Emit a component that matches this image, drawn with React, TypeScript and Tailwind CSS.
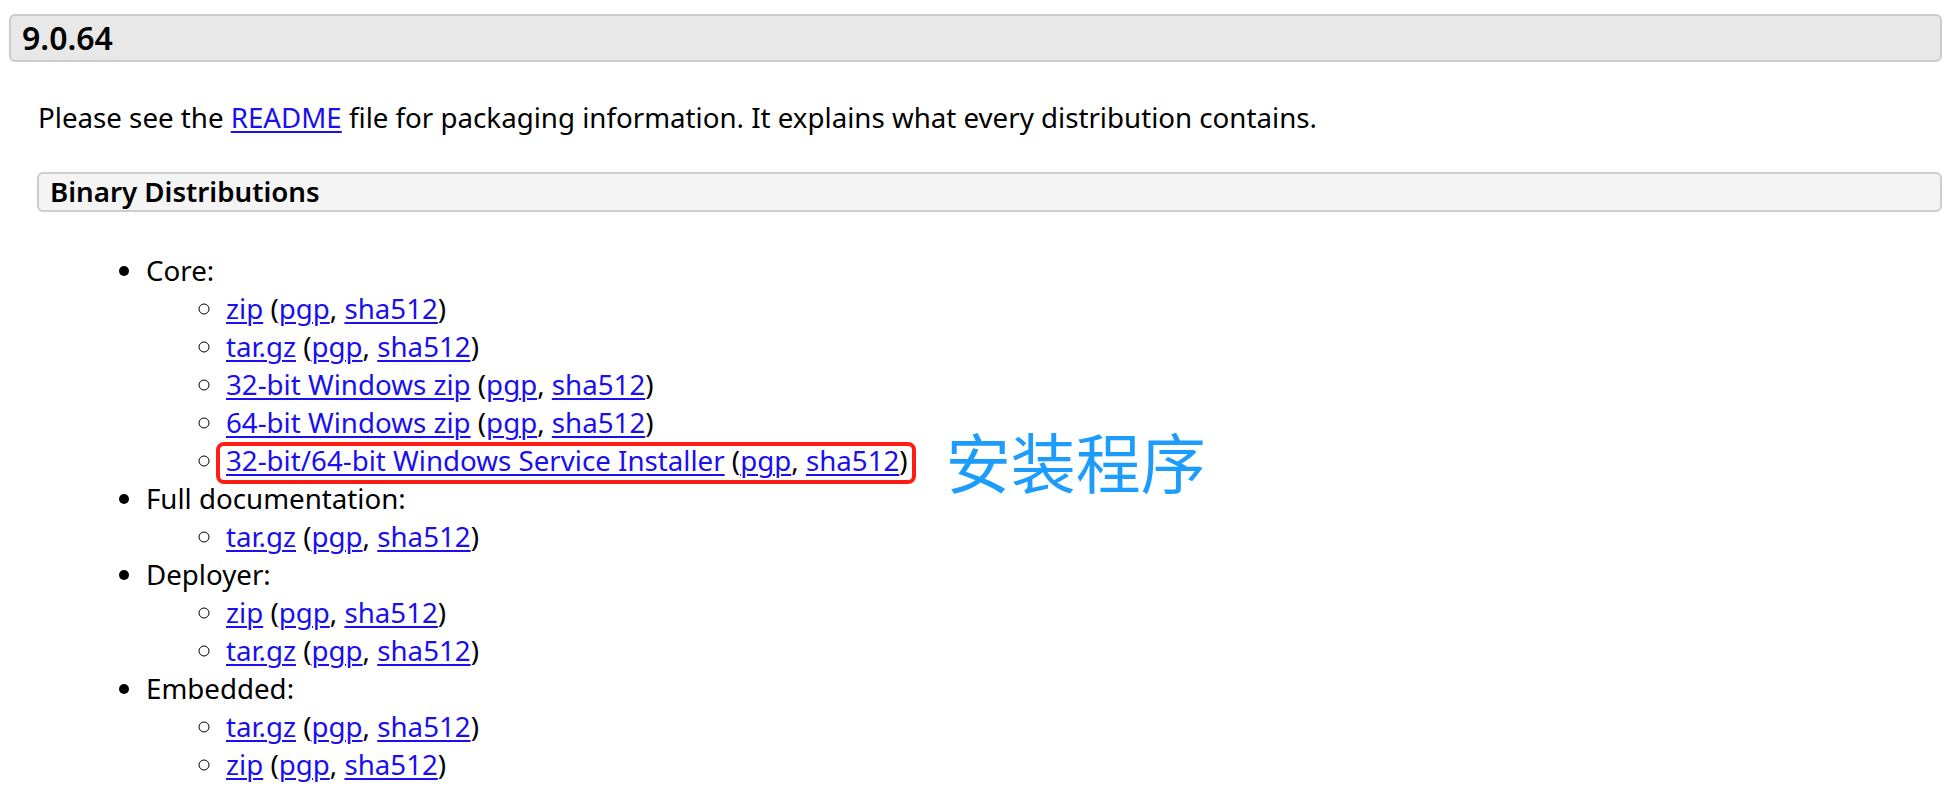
import React from "react";

type Dl = { label: string; boxed?: boolean };

const groups: { title: string; items: Dl[] }[] = [
  {
    title: "Core:",
    items: [
      { label: "zip" },
      { label: "tar.gz" },
      { label: "32-bit Windows zip" },
      { label: "64-bit Windows zip" },
      { label: "32-bit/64-bit Windows Service Installer", boxed: true },
    ],
  },
  { title: "Full documentation:", items: [{ label: "tar.gz" }] },
  { title: "Deployer:", items: [{ label: "zip" }, { label: "tar.gz" }] },
  { title: "Embedded:", items: [{ label: "tar.gz" }, { label: "zip" }] },
];

function Link({ children }: { children: React.ReactNode }) {
  return (
    <a href="#" className="text-[#1a0fee] underline decoration-[1.5px] underline-offset-[3px]">
      {children}
    </a>
  );
}

function Download({ item }: { item: Dl }) {
  const content = (
    <>
      <Link>{item.label}</Link> (<Link>pgp</Link>, <Link>sha512</Link>)
    </>
  );
  if (!item.boxed) return <li>{content}</li>;
  return (
    <li>
      <span className="relative inline-block">
        {content}
        {/* red annotation box */}
        <span className="pointer-events-none absolute -left-[10px] -right-[8px] top-[1px] -bottom-[5px] rounded-lg border-[4px] border-[#ff1c14]" />
        <span className="absolute left-full top-1/2 ml-[38px] -translate-y-1/2 whitespace-nowrap text-[65px] leading-none text-[#1c9cfc] font-['Noto_Sans_CJK_SC',sans-serif]">
          安装程序
        </span>
      </span>
    </li>
  );
}

export default function App() {
  return (
    <div className="min-h-screen bg-white pt-[14px] text-black font-['Noto_Sans',sans-serif]">
      <div className="ml-[9px] mr-[15px] flex h-[48px] items-center rounded-md border-2 border-[#cbcbcb] bg-[#e8e8e8] pl-[11px]">
        <h3 className="text-[32px] font-semibold leading-none">9.0.64</h3>
      </div>

      <div className="pl-[38px] pr-[15px]">
        <p className="mt-[36px] text-[27.7px] leading-[38px]">
          Please see the <Link>README</Link> file for packaging information. It explains what every distribution contains.
        </p>

        <div className="-ml-[1px] mt-[36px] flex h-[40px] items-center rounded-md border-2 border-[#cdcdcd] bg-[#f4f4f4] pl-[11px]">
          <h4 className="text-[27.7px] font-semibold leading-none">Binary Distributions</h4>
        </div>

        <ul className="mt-[39px] list-disc pl-[108px] text-[27.7px] leading-[38px]">
          {groups.map((g) => (
            <li key={g.title}>
              {g.title}
              <ul className="list-[circle] pl-[80px]">
                {g.items.map((it, i) => (
                  <Download key={i} item={it} />
                ))}
              </ul>
            </li>
          ))}
        </ul>
      </div>
    </div>
  );
}
